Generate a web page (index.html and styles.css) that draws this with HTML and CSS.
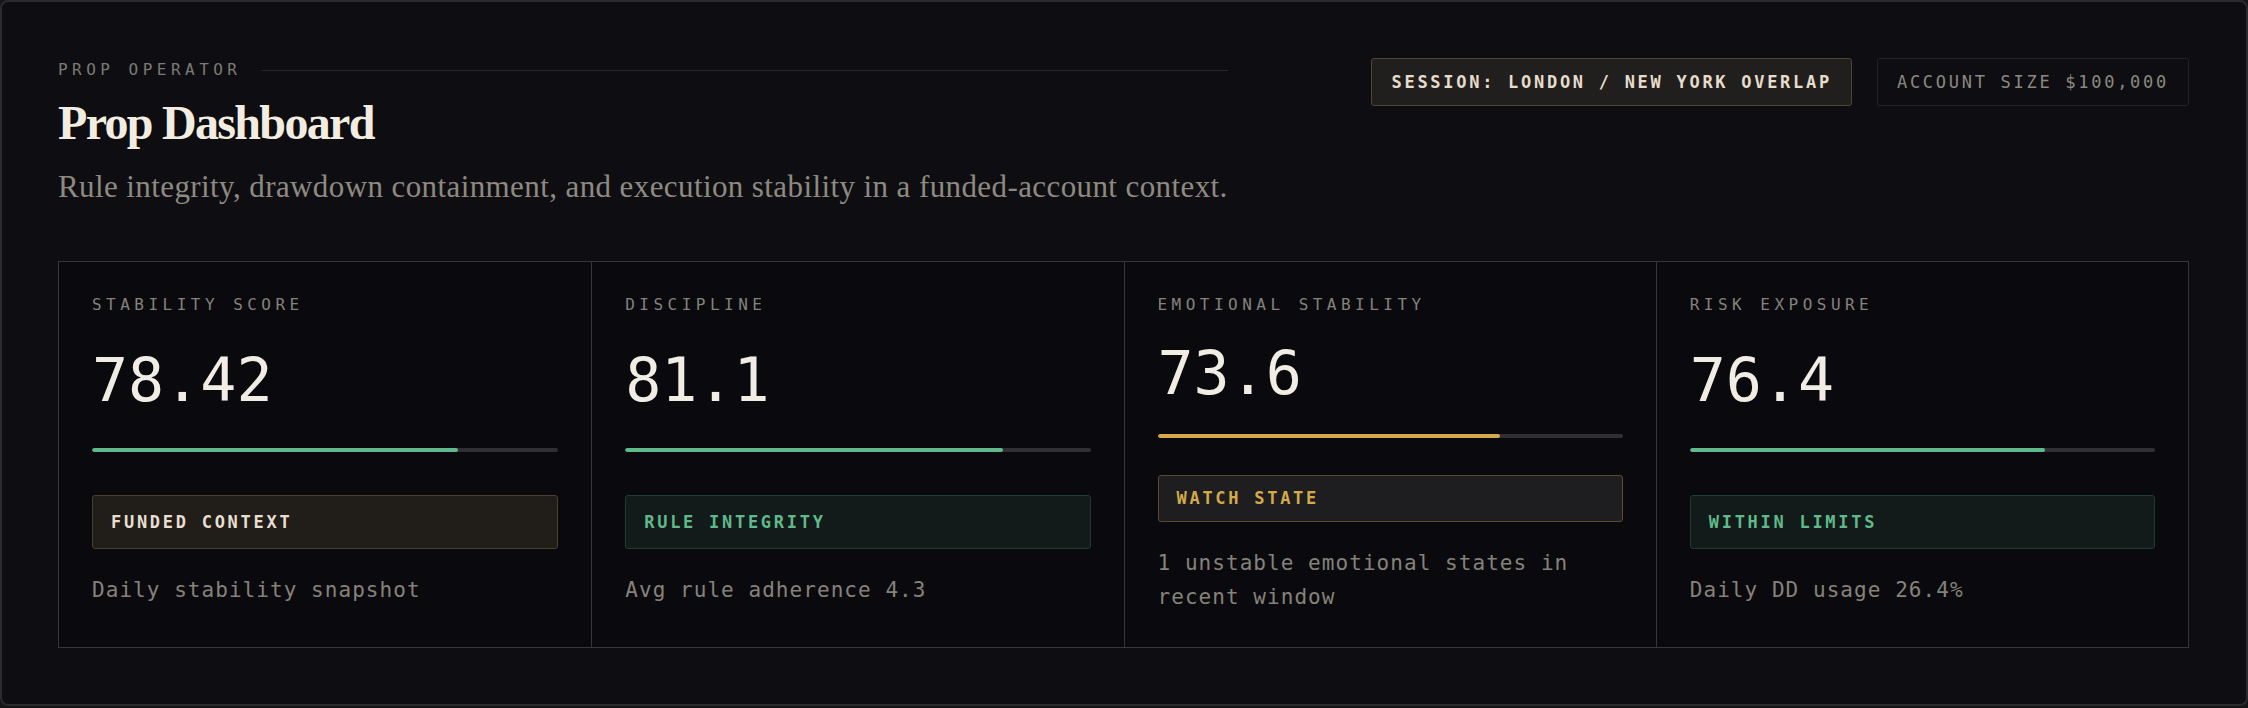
FILE: index.html
```html
<!DOCTYPE html>
<html lang="en">
<head>
<meta charset="UTF-8" />
<meta name="viewport" content="width=device-width, initial-scale=1" />
<title>Prop Dashboard</title>
<link rel="stylesheet" href="styles.css">
</head>
<body>

<div class="frame">
  <header class="top">
    <div class="intro">
      <div class="eyebrow">
        <span>PROP OPERATOR</span>
        <span class="rule"></span>
      </div>
      <h1>Prop Dashboard</h1>
      <p class="lead">Rule integrity, drawdown containment, and execution stability in a funded-account context.</p>
    </div>
    <div class="pills">
      <div class="pill pill-session">SESSION: LONDON / NEW YORK OVERLAP</div>
      <div class="pill pill-account">ACCOUNT SIZE $100,000</div>
    </div>
  </header>

  <section class="metrics">
    <div class="metric">
      <div class="label">STABILITY SCORE</div>
      <div class="value">78.42</div>
      <div class="bar"><div class="fill green" style="width: 78.42%"></div></div>
      <div class="badge badge-funded">FUNDED CONTEXT</div>
      <div class="note">Daily stability snapshot</div>
    </div>
    <div class="metric">
      <div class="label">DISCIPLINE</div>
      <div class="value">81.1</div>
      <div class="bar"><div class="fill green" style="width: 81.1%"></div></div>
      <div class="badge badge-ok">RULE INTEGRITY</div>
      <div class="note">Avg rule adherence 4.3</div>
    </div>
    <div class="metric">
      <div class="label">EMOTIONAL STABILITY</div>
      <div class="value">73.6</div>
      <div class="bar"><div class="fill gold" style="width: 73.6%"></div></div>
      <div class="badge badge-watch">WATCH STATE</div>
      <div class="note">1 unstable emotional states in recent window</div>
    </div>
    <div class="metric">
      <div class="label">RISK EXPOSURE</div>
      <div class="value">76.4</div>
      <div class="bar"><div class="fill green" style="width: 76.4%"></div></div>
      <div class="badge badge-ok">WITHIN LIMITS</div>
      <div class="note">Daily DD usage 26.4%</div>
    </div>
  </section>
</div>

</body>
</html>
```

FILE: styles.css
```css
body {
  margin: 0;
  background: #151517;
  color: #f1ede4;
  font-family: "DejaVu Sans Mono", "Liberation Mono", monospace;
}
.frame {
  border: 2px solid #2b2b2f;
  border-radius: 8px;
  background: #0e0e12;
  padding: 56px 57px 56px 56px;
}

/* header */
.top {
  display: flex;
  justify-content: space-between;
  align-items: flex-start;
}
.intro {
  flex: none;
}
.eyebrow {
  display: flex;
  align-items: center;
  gap: 20px;
  margin-top: 2px;
  font-size: 16px;
  line-height: 20px;
  letter-spacing: 0.28em;
  color: #7c7a74;
}
.eyebrow .rule {
  flex: 1;
  height: 1px;
  background: #25252a;
}
h1 {
  margin: 17px 0 0;
  font-family: "Liberation Serif", "Times New Roman", serif;
  font-size: 48px;
  line-height: 1.1;
  font-weight: bold;
  letter-spacing: -0.035em;
  color: #f2ede0;
}
.lead {
  margin: 15px 0 0;
  font-family: "Liberation Serif", "Times New Roman", serif;
  font-size: 31px;
  line-height: 1.4;
  letter-spacing: 0.013em;
  color: #8e8a81;
  white-space: nowrap;
}
.pills {
  display: flex;
  gap: 25px;
}
.pill {
  padding: 13px 19px;
  font-size: 17px;
  line-height: 20px;
  letter-spacing: 0.16em;
  border: 1px solid;
  border-radius: 3px;
  white-space: nowrap;
}
.pill-session {
  background: #211f1e;
  border-color: #4f4534;
  color: #e6dccb;
  font-weight: bold;
}
.pill-account {
  border-color: #1f2421;
  color: #8c8880;
}

/* metric cards */
.metrics {
  margin-top: 53px;
  display: grid;
  grid-template-columns: repeat(4, 1fr);
  border: 1px solid #36363b;
  background: #0a0a0e;
}
.metric {
  display: grid;
  padding: 31px 33px 33px;
  border-left: 1px solid #36363b;
}
.metric:first-child {
  border-left: none;
}
.label {
  font-size: 16px;
  line-height: 24px;
  letter-spacing: 0.28em;
  color: #85827b;
}
.value {
  margin-top: 26px;
  font-size: 60px;
  line-height: 60px;
  color: #f1ede4;
}
.bar {
  margin-top: 31px;
  height: 4px;
  border-radius: 2px;
  background: #2f2f34;
  overflow: hidden;
}
.fill {
  height: 100%;
  border-radius: 2px;
}
.fill.green { background: #5fb98a; }
.fill.gold { background: #d4a94a; }

.badge {
  margin-top: 37px;
  display: flex;
  align-items: center;
  padding: 13px 18px;
  font-size: 17px;
  line-height: 19px;
  font-weight: bold;
  letter-spacing: 0.16em;
  border: 1px solid;
  border-radius: 3px;
}
.badge-funded {
  background: #211d19;
  border-color: #4b3f2e;
  color: #e8dfd0;
}
.badge-ok {
  background: #121b19;
  border-color: #1f3a2e;
  color: #5fb98a;
}
.badge-watch {
  background: #1e1e20;
  border-color: #5a4a30;
  color: #d4a94a;
}
.note {
  margin-top: 25px;
  font-size: 21px;
  line-height: 1.6;
  letter-spacing: 0.05em;
  color: #86827a;
}
```
